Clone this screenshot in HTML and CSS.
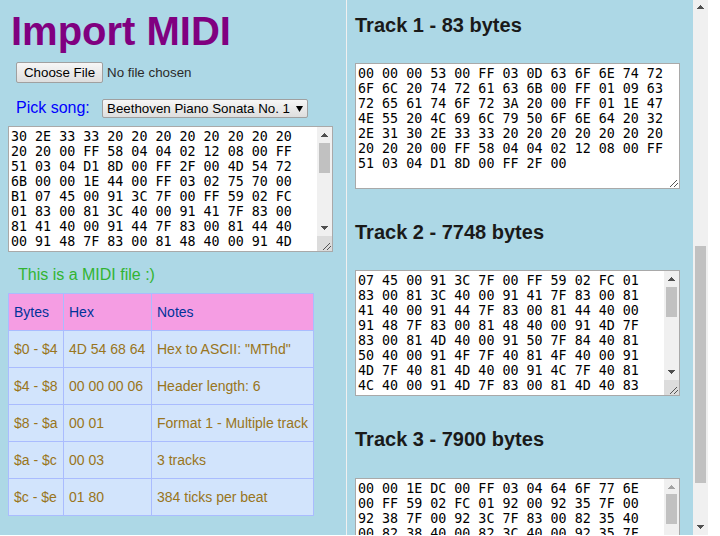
FILE: index.html
```html
<!DOCTYPE html>
<html lang="en">
<head>
<meta charset="utf-8">
<title>Import MIDI</title>
<link rel="stylesheet" href="styles.css">
</head>
<body>
<div class="page">
  <main class="import">
    <h1>Import MIDI</h1>
    <div class="file-row"><button class="choose">Choose File</button><span>No file chosen</span></div>
    <div class="song-row"><span class="pick">Pick song:</span><div class="select"><span>Beethoven Piano Sonata No. 1</span><svg width="7" height="6" viewBox="0 0 7 6"><path d="M0 0H7L3.5 6Z"/></svg></div></div>
    <div class="hexbox">
<pre>30 2E 33 33 20 20 20 20 20 20 20 20
20 20 00 FF 58 04 04 02 12 08 00 FF
51 03 04 D1 8D 00 FF 2F 00 4D 54 72
6B 00 00 1E 44 00 FF 03 02 75 70 00
B1 07 45 00 91 3C 7F 00 FF 59 02 FC
01 83 00 81 3C 40 00 91 41 7F 83 00
81 41 40 00 91 44 7F 83 00 81 44 40
00 91 48 7F 83 00 81 48 40 00 91 4D</pre>
      <div class="bar scrolled"><svg class="up" viewBox="0 0 7 4"><path d="M3 0h1v1h1v1h1v1h1v1H0V3h1V2h1V1h1Z"/></svg><i class="thumb"></i><svg class="down" viewBox="0 0 7 4"><path d="M0 0h7v1H6v1H5v1H4v1H3V3H2V2H1V1H0Z"/></svg><i class="corner"></i></div>
      <svg class="grip" viewBox="0 0 8 8"><path d="M0 7h1v1H0zM1 6h1v1H1zM2 5h1v1H2zM3 4h1v1H3zM4 3h1v1H4zM5 2h1v1H5zM6 1h1v1H6zM4 7h1v1H4zM5 6h1v1H5zM6 5h1v1H6zM7 4h1v1H7z"/></svg>
    </div>
    <p class="status">This is a MIDI file :)</p>
    <table>
      <tr><th class="bytes">Bytes</th><th class="hex">Hex</th><th>Notes</th></tr>
      <tr><td>$0 - $4</td><td>4D 54 68 64</td><td>Hex to ASCII: "MThd"</td></tr>
      <tr><td>$4 - $8</td><td>00 00 00 06</td><td>Header length: 6</td></tr>
      <tr><td>$8 - $a</td><td>00 01</td><td>Format 1 - Multiple track</td></tr>
      <tr><td>$a - $c</td><td>00 03</td><td>3 tracks</td></tr>
      <tr><td>$c - $e</td><td>01 80</td><td>384 ticks per beat</td></tr>
    </table>
  </main>
  <section class="tracks">
    <h2>Track 1 - 83 bytes</h2>
    <div class="hexbox">
<pre>00 00 00 53 00 FF 03 0D 63 6F 6E 74 72
6F 6C 20 74 72 61 63 6B 00 FF 01 09 63
72 65 61 74 6F 72 3A 20 00 FF 01 1E 47
4E 55 20 4C 69 6C 79 50 6F 6E 64 20 32
2E 31 30 2E 33 33 20 20 20 20 20 20 20
20 20 20 00 FF 58 04 04 02 12 08 00 FF
51 03 04 D1 8D 00 FF 2F 00</pre>
      <svg class="grip" viewBox="0 0 8 8"><path d="M0 7h1v1H0zM1 6h1v1H1zM2 5h1v1H2zM3 4h1v1H3zM4 3h1v1H4zM5 2h1v1H5zM6 1h1v1H6zM4 7h1v1H4zM5 6h1v1H5zM6 5h1v1H6zM7 4h1v1H7z"/></svg>
    </div>
    <h2>Track 2 - 7748 bytes</h2>
    <div class="hexbox">
<pre>07 45 00 91 3C 7F 00 FF 59 02 FC 01
83 00 81 3C 40 00 91 41 7F 83 00 81
41 40 00 91 44 7F 83 00 81 44 40 00
91 48 7F 83 00 81 48 40 00 91 4D 7F
83 00 81 4D 40 00 91 50 7F 84 40 81
50 40 00 91 4F 7F 40 81 4F 40 00 91
4D 7F 40 81 4D 40 00 91 4C 7F 40 81
4C 40 00 91 4D 7F 83 00 81 4D 40 83</pre>
      <div class="bar scrolled"><svg class="up" viewBox="0 0 7 4"><path d="M3 0h1v1h1v1h1v1h1v1H0V3h1V2h1V1h1Z"/></svg><i class="thumb"></i><svg class="down" viewBox="0 0 7 4"><path d="M0 0h7v1H6v1H5v1H4v1H3V3H2V2H1V1H0Z"/></svg><i class="corner"></i></div>
      <svg class="grip" viewBox="0 0 8 8"><path d="M0 7h1v1H0zM1 6h1v1H1zM2 5h1v1H2zM3 4h1v1H3zM4 3h1v1H4zM5 2h1v1H5zM6 1h1v1H6zM4 7h1v1H4zM5 6h1v1H5zM6 5h1v1H6zM7 4h1v1H7z"/></svg>
    </div>
    <h2 class="last">Track 3 - 7900 bytes</h2>
    <div class="hexbox">
<pre>00 00 1E DC 00 FF 03 04 64 6F 77 6E
00 FF 59 02 FC 01 92 00 92 35 7F 00
92 38 7F 00 92 3C 7F 83 00 82 35 40
00 82 38 40 00 82 3C 40 00 92 35 7F</pre>
      <div class="bar top"><svg class="up" viewBox="0 0 7 4"><path d="M3 0h1v1h1v1h1v1h1v1H0V3h1V2h1V1h1Z"/></svg><i class="thumb"></i></div>
    </div>
  </section>
  <div class="bar pagebar"><svg class="up" viewBox="0 0 7 4"><path d="M3 0h1v1h1v1h1v1h1v1H0V3h1V2h1V1h1Z"/></svg><i class="thumb"></i><svg class="down" viewBox="0 0 7 4"><path d="M0 0h7v1H6v1H5v1H4v1H3V3H2V2H1V1H0Z"/></svg></div>
</div>
</body>
</html>
```
FILE: styles.css
```css
* { box-sizing: border-box; }
body { margin: 0; background: #fff; overflow: hidden; font-family: "Liberation Sans", Arial, sans-serif; }
.page { display: grid; grid-template-columns: 346px 347px 15px; width: 708px; height: 535px; overflow: hidden; }
.import { background: #add8e6; padding: 8px 0 0 8px; height: 535px; overflow: hidden; }
.tracks { background: #add8e6; border-left: 1px solid #f0f0f0; padding-left: 8px; height: 535px; overflow: hidden; }

h1 { margin: 0 0 0 3px; font-size: 40px; line-height: 46px; color: #800080; white-space: nowrap; }
.file-row { display: flex; align-items: center; gap: 4px; margin: 8px 0 0 8px; height: 21px; font-size: 13.333px; color: #2a2a2a; }
.choose { width: 87px; height: 21px; padding: 0; font: 13.333px "Liberation Sans", Arial, sans-serif; color: #000; border: 1px solid #a0a0a0; border-radius: 2px; background: linear-gradient(#f6f6f6, #dedede); white-space: nowrap; }
.song-row { display: flex; align-items: center; margin: 16px 0 8px 8px; height: 19px; }
.pick { width: 86px; height: 19px; font-size: 16px; line-height: 17px; color: #0000ff; }
.select { display: flex; align-items: center; justify-content: space-between; width: 206px; height: 19px; padding: 0 4px 0 4px; border: 1px solid #a0a0a0; border-radius: 2px; background: linear-gradient(#f6f6f6, #dedede); font-size: 13.333px; color: #000; white-space: nowrap; }

.hexbox { position: relative; display: flex; justify-content: space-between; width: 325px; height: 126px; border: 1px solid #a9a9a9; background: #fff; overflow: hidden; }
pre { margin: 0; padding: 2px; font: 13.333px/15px "DejaVu Sans Mono", monospace; color: #000; }
.bar { display: flex; flex-direction: column; align-items: center; width: 15px; background: #f0f0f0; flex: none; }
.up, .down { display: block; width: 7px; height: 4px; flex: none; fill: #505050; }
.up { margin-top: 6px; }
.thumb { display: block; width: 11px; height: 30px; background: #c1c1c1; margin-top: 6px; flex: none; }
.down { margin-top: auto; margin-bottom: 6px; }
.corner { display: block; width: 15px; height: 15px; background: #dcdcdc; flex: none; }
.top .up { fill: #a3a3a3; }
.top .thumb { margin-top: 5px; }
.pagebar .up { margin-top: 5px; }
.pagebar .thumb { height: 237px; margin-top: 237px; }
.grip { position: absolute; right: 1px; bottom: 1px; width: 8px; height: 8px; fill: #555; }

.status { margin: 13px 0 9px 10px; font-size: 16px; line-height: 19px; color: #32b432; }
table { border-collapse: collapse; table-layout: fixed; width: 306px; font-size: 14px; }
th, td { height: 37px; padding: 0 5px; border: 1px solid #aabcfe; text-align: left; font-weight: normal; white-space: nowrap; line-height: 16px; }
th { background: #f59de3; color: #003399; }
td { background: #d2e4fc; color: #997520; }
.bytes { width: 55px; }
.hex { width: 88px; }

h2 { margin: 14px 0 26px; font-size: 20px; line-height: 23px; color: #1a1a1a; }
.hexbox + h2 { margin: 32px 0 26px; }
.hexbox + h2.last { margin: 32px 0 27px; }
```
